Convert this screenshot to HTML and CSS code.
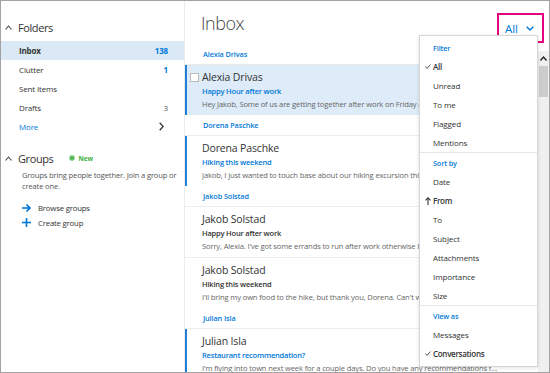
FILE: index.html
```html
<!DOCTYPE html>
<html lang="en">
<head>
<meta charset="utf-8">
<title>Inbox</title>
<link rel="stylesheet" href="styles.css">
</head>
<body>
<div class="frame">
  <aside class="sidebar">
    <div class="sec-head">
      <svg class="caret" width="7" height="5" viewBox="0 0 7 5"><polyline points="0.5,4.5 3.5,1 6.5,4.5" fill="none" stroke="#444" stroke-width="1.1"/></svg>
      <span>Folders</span>
    </div>
    <div class="folders">
      <div class="folder active"><span>Inbox</span><span class="count">138</span></div>
      <div class="folder"><span>Clutter</span><span class="count">1</span></div>
      <div class="folder"><span>Sent Items</span></div>
      <div class="folder"><span>Drafts</span><span class="count plain">3</span></div>
      <div class="folder more"><span>More</span>
        <svg width="5" height="9" viewBox="0 0 5 9"><polyline points="0.7,0.7 4.2,4.5 0.7,8.3" fill="none" stroke="#333" stroke-width="1.3"/></svg>
      </div>
    </div>
    <div class="sec-head groups-head">
      <svg class="caret" width="7" height="5" viewBox="0 0 7 5"><polyline points="0.5,4.5 3.5,1 6.5,4.5" fill="none" stroke="#444" stroke-width="1.1"/></svg>
      <span>Groups</span>
      <span class="new">
        <svg width="6" height="6" viewBox="0 0 6 6"><g stroke="#3cb043" stroke-width="1.1"><line x1="3" y1="0" x2="3" y2="6"/><line x1="0" y1="3" x2="6" y2="3"/><line x1="0.9" y1="0.9" x2="5.1" y2="5.1"/><line x1="5.1" y1="0.9" x2="0.9" y2="5.1"/></g></svg>
        New
      </span>
    </div>
    <p class="desc">Groups bring people together. Join a group or create one.</p>
    <div class="actions">
      <div class="action">
        <svg width="9" height="8" viewBox="0 0 9 8"><g fill="none" stroke="#0078d7" stroke-width="1.6"><line x1="0" y1="4" x2="8" y2="4"/><polyline points="4.5,0.6 8,4 4.5,7.4"/></g></svg>
        <span>Browse groups</span>
      </div>
      <div class="action">
        <svg width="9" height="9" viewBox="0 0 9 9"><g stroke="#0078d7" stroke-width="1.6"><line x1="4.5" y1="0" x2="4.5" y2="9"/><line x1="0" y1="4.5" x2="9" y2="4.5"/></g></svg>
        <span>Create group</span>
      </div>
    </div>
  </aside>

  <main class="main">
    <header class="main-head">
      <h1 class="title">Inbox</h1>
      <button class="filter-btn"><span>All</span>
        <svg width="8" height="5" viewBox="0 0 8 5"><polyline points="0.7,0.7 4,4 7.3,0.7" fill="none" stroke="#0078d7" stroke-width="1.4"/></svg>
      </button>
    </header>
    <div class="body">
      <div class="list">
        <div class="grp">Alexia Drivas</div>
        <div class="item selected bar">
          <span class="check"></span>
          <div class="txt">
            <div class="name">Alexia Drivas</div>
            <div class="subj unread">Happy Hour after work</div>
            <div class="prev">Hey Jakob, Some of us are getting together after work on Friday at 5. Want to join us?</div>
          </div>
        </div>
        <div class="grp">Dorena Paschke</div>
        <div class="item bar">
          <span></span>
          <div class="txt">
            <div class="name">Dorena Paschke</div>
            <div class="subj unread">Hiking this weekend</div>
            <div class="prev">Jakob, I just wanted to touch base about our hiking excursion this weekend.</div>
          </div>
        </div>
        <div class="grp">Jakob Solstad</div>
        <div class="item">
          <span></span>
          <div class="txt">
            <div class="name">Jakob Solstad</div>
            <div class="subj">Happy Hour after work</div>
            <div class="prev">Sorry, Alexia. I've got some errands to run after work otherwise I would love to.</div>
          </div>
        </div>
        <div class="item">
          <span></span>
          <div class="txt">
            <div class="name">Jakob Solstad</div>
            <div class="subj">Hiking this weekend</div>
            <div class="prev">I'll bring my own food to the hike, but thank you, Dorena. Can't wait!</div>
          </div>
        </div>
        <div class="grp">Julian Isla</div>
        <div class="item bar">
          <span></span>
          <div class="txt">
            <div class="name">Julian Isla</div>
            <div class="subj unread">Restaurant recommendation?</div>
            <div class="prev">I'm flying into town next week for a couple days. Do you have any recommendations for a good place to eat?</div>
          </div>
        </div>
      </div>
      <div class="scroll">
        <svg width="7" height="5" viewBox="0 0 7 5"><polyline points="0.5,4.5 3.5,1 6.5,4.5" fill="none" stroke="#222" stroke-width="1.3"/></svg>
        <div class="thumb"></div>
      </div>
    </div>
  </main>

  <div class="menu">
    <div class="msec">
      <div class="mi mh"><span></span><span>Filter</span></div>
      <div class="mi sel"><svg width="6" height="5" viewBox="0 0 6 5"><polyline points="0.4,2.6 2,4.3 5.6,0.5" fill="none" stroke="#333" stroke-width="0.9"/></svg><span>All</span></div>
      <div class="mi"><span></span><span>Unread</span></div>
      <div class="mi"><span></span><span>To me</span></div>
      <div class="mi"><span></span><span>Flagged</span></div>
      <div class="mi"><span></span><span>Mentions</span></div>
    </div>
    <div class="msec">
      <div class="mi mh"><span></span><span>Sort by</span></div>
      <div class="mi"><span></span><span>Date</span></div>
      <div class="mi sel"><svg width="6" height="8" viewBox="0 0 6 8"><g fill="none" stroke="#333" stroke-width="1.1"><line x1="3" y1="1" x2="3" y2="8"/><polyline points="0.5,3.4 3,0.9 5.5,3.4"/></g></svg><span>From</span></div>
      <div class="mi"><span></span><span>To</span></div>
      <div class="mi"><span></span><span>Subject</span></div>
      <div class="mi"><span></span><span>Attachments</span></div>
      <div class="mi"><span></span><span>Importance</span></div>
      <div class="mi"><span></span><span>Size</span></div>
    </div>
    <div class="msec">
      <div class="mi mh"><span></span><span>View as</span></div>
      <div class="mi"><span></span><span>Messages</span></div>
      <div class="mi sel"><svg width="6" height="5" viewBox="0 0 6 5"><polyline points="0.4,2.6 2,4.3 5.6,0.5" fill="none" stroke="#333" stroke-width="0.9"/></svg><span>Conversations</span></div>
    </div>
  </div>
</div>
</body>
</html>
```
FILE: styles.css
```css
* { box-sizing: border-box; margin: 0; padding: 0; }
body { margin: 0; background: #fff; color: #333; font-family: "Open Sans", "Noto Sans", sans-serif; }

.frame { position: relative; width: 550px; height: 373px; border: 1px solid #a3a3a3; display: flex; overflow: hidden; background: #fff; }

/* sidebar */
.sidebar { width: 184px; flex: none; border-right: 1px solid #ebebeb; padding-top: 15px; }
.sec-head { display: flex; align-items: center; height: 22px; padding-left: 4px; font-size: 11px; letter-spacing: -0.4px; color: #333; }
.sec-head .caret { margin-right: 6px; }
.folders { margin-top: 3px; }
.folder { display: flex; justify-content: space-between; align-items: center; height: 19px; padding: 0 16px 0 18px; font-size: 8px; letter-spacing: -0.15px; color: #333; }
.folder.active { background: #dbe9f7; font-weight: 700; }
.count { color: #0078d7; font-weight: 700; }
.count.plain { color: #555; font-weight: 400; }
.folder.more { color: #0078d7; padding-right: 20px; }
.groups-head { margin-top: 11px; }
.new { display: flex; align-items: center; gap: 3px; margin-left: 16px; font-size: 6.5px; letter-spacing: 0; font-weight: 700; color: #3cb043; }
.desc { margin-top: 1px; padding: 0 0 0 21px; font-size: 7.6px; letter-spacing: -0.15px; line-height: 11px; color: #555; }
.actions { margin-top: 8px; padding-left: 21px; }
.action { display: flex; align-items: center; height: 15px; font-size: 7.8px; letter-spacing: -0.2px; color: #333; }
.action svg { width: 9px; margin-right: 7px; }

/* main */
.main { flex: 1; display: flex; flex-direction: column; min-width: 0; }
.main-head { height: 43px; flex: none; display: flex; justify-content: space-between; align-items: flex-start; padding-left: 16px; }
.title { margin-top: 10px; font-size: 18px; letter-spacing: -0.5px; line-height: 24px; font-weight: 300; color: #444; }
.filter-btn { margin-top: 12px; margin-right: 5px; width: 47px; height: 30px; border: 2px solid #e4057f; background: #fff; display: flex; align-items: center; justify-content: flex-end; gap: 8px; padding-right: 8px; font-family: inherit; font-size: 11.5px; color: #0078d7; }

.body { flex: 1; display: flex; min-height: 0; }
.list { flex: 1; min-width: 0; overflow: hidden; }
.grp { height: 20px; display: flex; align-items: center; padding-left: 18px; font-size: 7.3px; letter-spacing: -0.1px; font-weight: 600; color: #0078d7; }
.item { display: grid; grid-template-columns: 17px 1fr; height: 51px; border-top: 1px solid #ececec; padding-top: 4px; }
.item.bar { box-shadow: inset 2px 0 0 #1f80d8; }
.item.selected { background: #deebf8; }
.check { width: 9px; height: 9px; margin: 4px 0 0 5px; background: #fff; border: 1px solid #b9b9b9; }
.txt { min-width: 0; padding-right: 40px; }
.name { font-size: 10.5px; letter-spacing: -0.15px; line-height: 16px; color: #333; white-space: nowrap; }
.subj { font-size: 7.5px; letter-spacing: -0.2px; line-height: 13px; font-weight: 600; color: #333; white-space: nowrap; }
.subj.unread { color: #0078d7; }
.prev { font-size: 7.6px; letter-spacing: -0.15px; line-height: 13px; color: #666; white-space: nowrap; overflow: hidden; text-overflow: ellipsis; }

.scroll { width: 11px; flex: none; margin-top: 7px; background: #f0f0f0; display: flex; flex-direction: column; align-items: center; padding-top: 5px; }
.thumb { width: 9px; height: 31px; margin-top: 5px; background: #cdcdcd; }

/* dropdown menu */
.menu { position: absolute; left: 418px; top: 34px; width: 119px; height: 332px; background: #fff; border: 1px solid #d6d6d6; box-shadow: 0 1px 4px rgba(0, 0, 0, 0.12); padding-top: 2px; }
.msec + .msec { border-top: 1px solid #e8e8e8; }
.mi { display: grid; grid-template-columns: 13px 1fr; align-items: center; height: 19px; font-size: 8px; letter-spacing: -0.1px; color: #333; }
.mi svg { justify-self: end; margin-right: 2px; }
.mi.sel { font-weight: 600; letter-spacing: -0.3px; }
.mi.mh { font-size: 7.2px; letter-spacing: -0.1px; font-weight: 600; color: #0078d7; }
```
